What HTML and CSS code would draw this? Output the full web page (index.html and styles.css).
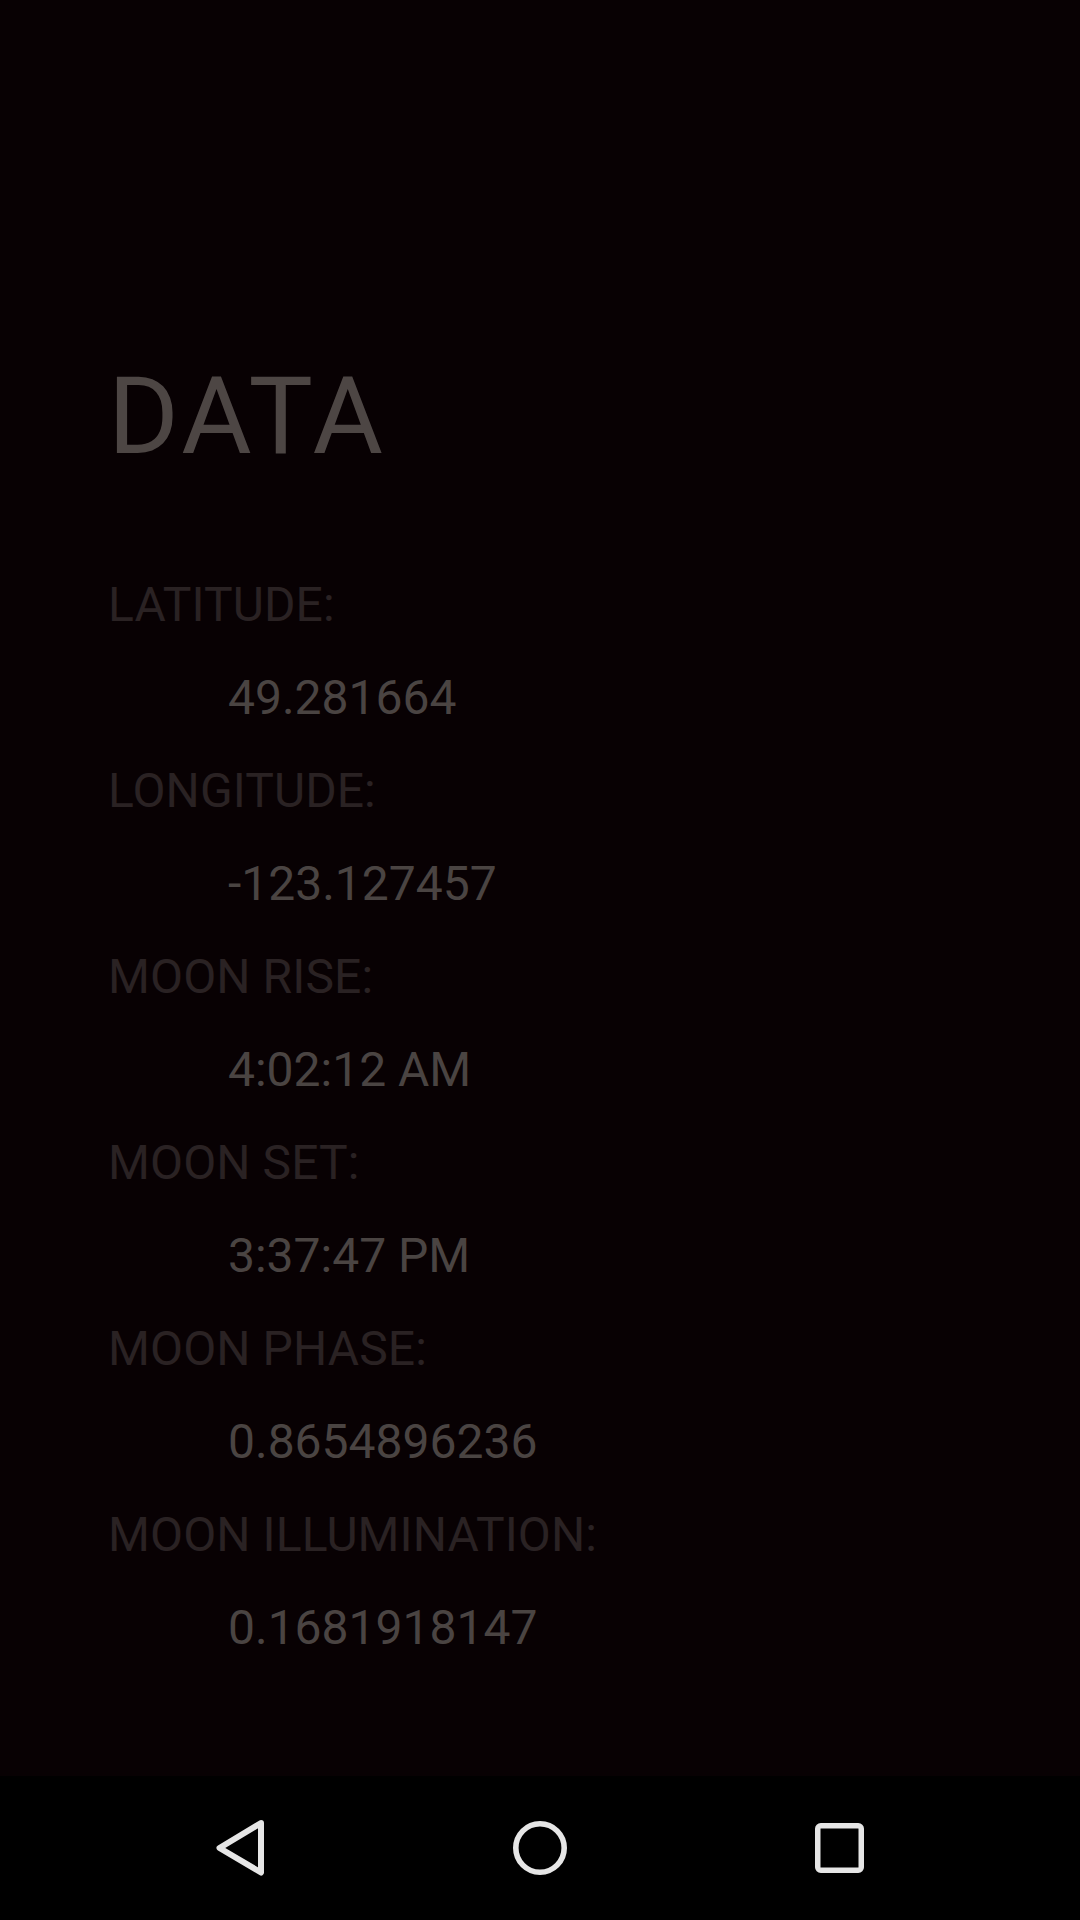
FILE: index.html
```html
<!DOCTYPE html>
<html lang="en">
<head>
<meta charset="utf-8">
<title>Data</title>
<link rel="stylesheet" href="styles.css">
</head>
<body>
<div class="screen">
  <main class="content">
    <h1 class="title">DATA</h1>
    <dl class="data-list">
      <dt class="label">LATITUDE:</dt>
      <dd class="value">49.281664</dd>
      <dt class="label">LONGITUDE:</dt>
      <dd class="value">-123.127457</dd>
      <dt class="label">MOON RISE:</dt>
      <dd class="value">4:02:12 AM</dd>
      <dt class="label">MOON SET:</dt>
      <dd class="value">3:37:47 PM</dd>
      <dt class="label">MOON PHASE:</dt>
      <dd class="value">0.8654896236</dd>
      <dt class="label">MOON ILLUMINATION:</dt>
      <dd class="value">0.1681918147</dd>
    </dl>
  </main>
  <nav class="navbar">
    <div class="nav-btn">
      <svg width="72" height="72" viewBox="0 0 72 72"><path d="M57 11 L15.5 36 L57 60.5 Z" fill="none" stroke="#e6e6e6" stroke-width="6" stroke-linejoin="round"/></svg>
    </div>
    <div class="nav-btn">
      <svg width="72" height="72" viewBox="0 0 72 72"><circle cx="36" cy="36" r="24.2" fill="none" stroke="#e6e6e6" stroke-width="5.6"/></svg>
    </div>
    <div class="nav-btn">
      <svg width="72" height="72" viewBox="0 0 72 72"><rect x="13.75" y="13.75" width="43.5" height="44.5" rx="3" fill="none" stroke="#e6e6e6" stroke-width="5.5"/></svg>
    </div>
  </nav>
</div>
</body>
</html>
```

FILE: styles.css
```css
html, body {
  margin: 0;
  padding: 0;
  background: #080103;
}

.screen {
  width: 1080px;
  height: 1920px;
  display: flex;
  flex-direction: column;
  background: #080103;
  font-family: Roboto, "Liberation Sans", sans-serif;
}

.content {
  flex: 1;
  padding: 353px 0 0 108px;
  box-sizing: border-box;
}

.title {
  margin: 0 0 79px 0;
  font-size: 108px;
  font-weight: 400;
  line-height: normal;
  color: #4d4644;
  letter-spacing: 3.6px;
}

.data-list {
  margin: 0;
  padding: 0;
}

.label {
  margin: 0;
  font-size: 48px;
  line-height: 93px;
  height: 93px;
  color: #2a2223;
  letter-spacing: 0.1px;
}

.value {
  margin: 0 0 0 120px;
  font-size: 48px;
  line-height: 93px;
  height: 93px;
  color: #4a4442;
}

.navbar {
  height: 144px;
  flex: none;
  background: #000000;
  display: flex;
  justify-content: center;
  align-items: center;
  gap: 156px;
}

.nav-btn {
  width: 144px;
  height: 144px;
  display: flex;
  align-items: center;
  justify-content: center;
}

.nav-btn svg {
  display: block;
}
```
